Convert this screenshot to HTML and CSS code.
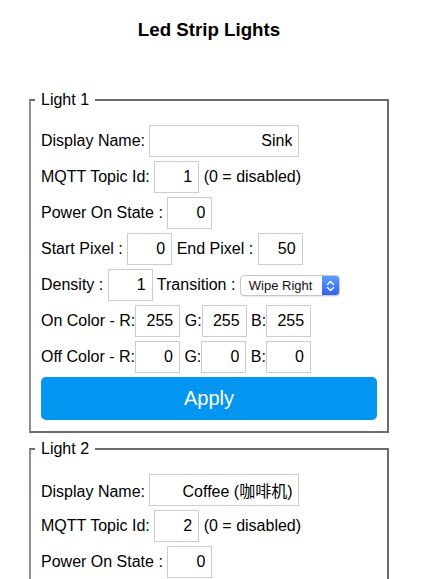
FILE: index.html
```html
<!DOCTYPE html>
<html lang="en">
<head>
<meta charset="utf-8">
<title>Led Strip Lights</title>
<link rel="stylesheet" href="styles.css">
</head>
<body>
<div class="page">
  <h3 class="title">Led Strip Lights</h3>

  <fieldset class="light">
    <legend class="light-legend">Light 1</legend>
    <div class="row">Display Name: <input class="field field-wide" type="text" value="Sink"></div>
    <div class="row">MQTT Topic Id: <input class="field" type="text" value="1"> (0 = disabled)</div>
    <div class="row">Power On State : <input class="field" type="text" value="0"></div>
    <div class="row">Start Pixel : <input class="field" type="text" value="0"> End Pixel : <input class="field" type="text" value="50"></div>
    <div class="row">Density : <input class="field" type="text" value="1"> Transition : <span class="select"><span class="select-text">Wipe Right</span><span class="select-arrows"><svg width="9" height="12" viewBox="0 0 9 12"><path d="M1.5 4.5 L4.5 1.5 L7.5 4.5 M1.5 7.5 L4.5 10.5 L7.5 7.5" fill="none" stroke="#fff" stroke-width="1.4" stroke-linecap="round" stroke-linejoin="round"/></svg></span></span></div>
    <div class="row">On Color - R:<input class="field" type="text" value="255"> G:<input class="field" type="text" value="255"> B:<input class="field" type="text" value="255"></div>
    <div class="row">Off Color - R:<input class="field" type="text" value="0"> G:<input class="field" type="text" value="0"> B:<input class="field" type="text" value="0"></div>
    <button class="apply" type="button">Apply</button>
  </fieldset>

  <fieldset class="light">
    <legend class="light-legend">Light 2</legend>
    <div class="row">Display Name: <input class="field field-wide" type="text" value="Coffee (咖啡机)"></div>
    <div class="row">MQTT Topic Id: <input class="field" type="text" value="2"> (0 = disabled)</div>
    <div class="row">Power On State : <input class="field" type="text" value="0"></div>
    <div class="row">Start Pixel : <input class="field" type="text" value="0"> End Pixel : <input class="field" type="text" value="50"></div>
    <div class="row">Density : <input class="field" type="text" value="1"> Transition : <span class="select"><span class="select-text">Wipe Right</span><span class="select-arrows"><svg width="9" height="12" viewBox="0 0 9 12"><path d="M1.5 4.5 L4.5 1.5 L7.5 4.5 M1.5 7.5 L4.5 10.5 L7.5 7.5" fill="none" stroke="#fff" stroke-width="1.4" stroke-linecap="round" stroke-linejoin="round"/></svg></span></span></div>
    <div class="row">On Color - R:<input class="field" type="text" value="255"> G:<input class="field" type="text" value="255"> B:<input class="field" type="text" value="255"></div>
    <div class="row">Off Color - R:<input class="field" type="text" value="0"> G:<input class="field" type="text" value="0"> B:<input class="field" type="text" value="0"></div>
    <button class="apply" type="button">Apply</button>
  </fieldset>
</div>
</body>
</html>
```

FILE: styles.css
```css
html, body {
  background: #ffffff;
}

body {
  margin: 0 12px 8px 8px;
  padding: 0;
  font-family: "Liberation Sans", Arial, "Noto Sans CJK SC", sans-serif;
  font-size: 16px;
  color: #000;
}

.page {
  width: 402px;
  padding-top: 19px;
}

.title {
  font-size: 18.72px;
  line-height: 22px;
  font-weight: bold;
  text-align: center;
  margin: 0 0 50px;
}

.light {
  width: 360px;
  box-sizing: border-box;
  margin: 0 auto 7px;
  padding: 14px 10px 11px;
  border: 2px solid #6c6c6c;
  border-left-color: #8e8e8e;
  min-width: 0;
}

.light-legend {
  font-size: 16px;
  line-height: 18px;
  padding: 0 6px;
  margin-left: -6px;
}

.row {
  white-space: nowrap;
}

.field {
  box-sizing: border-box;
  width: 45px;
  height: 32px;
  margin: 2px 0;
  padding: 0 6px 0 4px;
  border: 1px solid #cccccc;
  border-radius: 0;
  font-family: "Liberation Sans", Arial, "Noto Sans CJK SC", sans-serif;
  font-size: 16px;
  color: #000;
  text-align: right;
  background: #fff;
  outline: none;
}

.field-wide {
  width: 150px;
}

.select {
  display: inline-flex;
  box-sizing: border-box;
  width: 100px;
  height: 21px;
  vertical-align: middle;
  border: 1px solid #c6c6c6;
  border-radius: 4px;
  overflow: hidden;
  background: #fff;
  box-shadow: 0 1px 1px rgba(0, 0, 0, 0.08);
}

.select-text {
  flex: 1;
  font-size: 13px;
  line-height: 19px;
  padding-left: 8px;
  color: #111;
}

.select-arrows {
  width: 17px;
  display: flex;
  align-items: center;
  justify-content: center;
  background: linear-gradient(#5aa0fb, #3460ee);
}

.apply {
  display: block;
  width: 100%;
  height: 43px;
  margin-top: 2px;
  border: none;
  border-radius: 5px;
  background: #0396f0;
  color: #fff;
  font-family: "Liberation Sans", Arial, sans-serif;
  font-size: 20px;
  padding: 0;
}
```
